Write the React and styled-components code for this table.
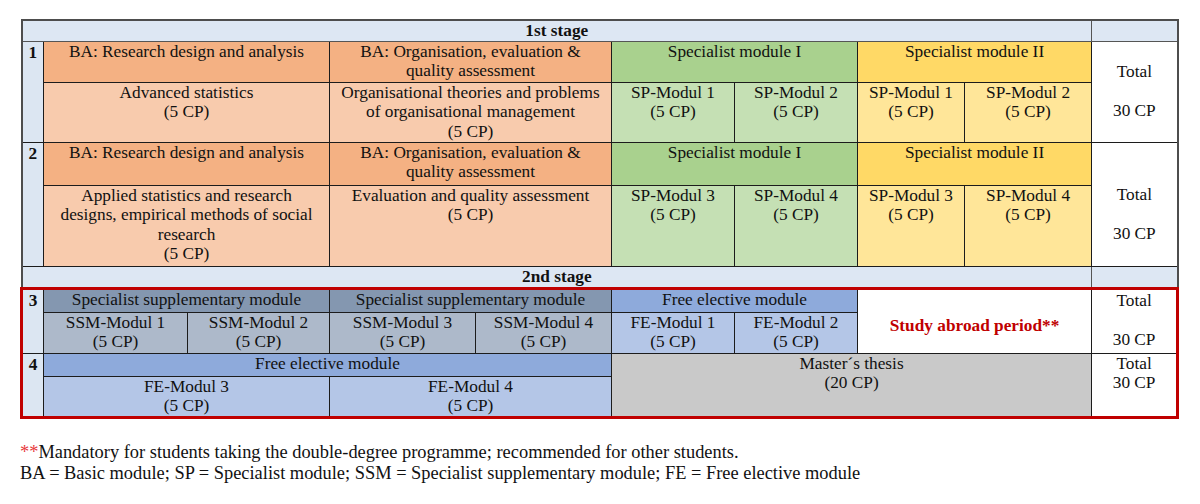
import styled, { createGlobalStyle } from 'styled-components';

const serif = `"Liberation Serif", "Times New Roman", Times, serif`;

const GlobalStyle = createGlobalStyle`
  body {
    margin: 0;
    background: #ffffff;
    font-family: ${serif};
    color: #111111;
  }
`;

const tones = {
  stage: '#dde7f3',
  num: '#dce6f2',
  baHead: '#f4b183',
  baSub: '#f8cbad',
  sp1Head: '#a9d18e',
  sp1Sub: '#c5e0b4',
  sp2Head: '#ffd966',
  sp2Sub: '#ffe699',
  ssmHead: '#8497b0',
  ssmSub: '#adb9ca',
  feHead: '#8eaadb',
  feSub: '#b4c6e7',
  thesis: '#c9c9c9',
  white: '#ffffff',
};

export default function App() {
  return (
    <Page>
      <GlobalStyle />
      <Schedule>
        <colgroup>
          <col style={{ width: 22 }} />
          <col style={{ width: 144 }} />
          <col style={{ width: 142 }} />
          <col style={{ width: 146 }} />
          <col style={{ width: 136 }} />
          <col style={{ width: 123 }} />
          <col style={{ width: 123 }} />
          <col style={{ width: 107 }} />
          <col style={{ width: 127 }} />
          <col style={{ width: 86 }} />
        </colgroup>
        <tbody>
          <Row $h={21}>
            <StageCell colSpan={9}>1st stage</StageCell>
            <StageCell />
          </Row>
          <Row $h={41}>
            <NumCell rowSpan={2}>1</NumCell>
            <Cell colSpan={2} $tone="baHead">BA: Research design and analysis</Cell>
            <Cell colSpan={2} $tone="baHead">
              BA: Organisation, evaluation &amp;
              <br />
              quality assessment
            </Cell>
            <Cell colSpan={2} $tone="sp1Head">Specialist module I</Cell>
            <Cell colSpan={2} $tone="sp2Head">Specialist module II</Cell>
            <TotalCell rowSpan={2} $pad={20}>
              Total
              <br />
              <br />
              30 CP
            </TotalCell>
          </Row>
          <Row $h={60}>
            <Cell colSpan={2} $tone="baSub">
              Advanced statistics
              <br />
              (5 CP)
            </Cell>
            <Cell colSpan={2} $tone="baSub">
              Organisational theories and problems
              <br />
              of organisational management
              <br />
              (5 CP)
            </Cell>
            <ModuleCell tone="sp1Sub" name="SP-Modul 1" />
            <ModuleCell tone="sp1Sub" name="SP-Modul 2" />
            <ModuleCell tone="sp2Sub" name="SP-Modul 1" />
            <ModuleCell tone="sp2Sub" name="SP-Modul 2" />
          </Row>
          <Row $h={43}>
            <NumCell rowSpan={2}>2</NumCell>
            <Cell colSpan={2} $tone="baHead">BA: Research design and analysis</Cell>
            <Cell colSpan={2} $tone="baHead">
              BA: Organisation, evaluation &amp;
              <br />
              quality assessment
            </Cell>
            <Cell colSpan={2} $tone="sp1Head">Specialist module I</Cell>
            <Cell colSpan={2} $tone="sp2Head">Specialist module II</Cell>
            <TotalCell rowSpan={2} $pad={42}>
              Total
              <br />
              <br />
              30 CP
            </TotalCell>
          </Row>
          <Row $h={81}>
            <Cell colSpan={2} $tone="baSub">
              Applied statistics and research
              <br />
              designs, empirical methods of social
              <br />
              research
              <br />
              (5 CP)
            </Cell>
            <Cell colSpan={2} $tone="baSub">
              Evaluation and quality assessment
              <br />
              (5 CP)
            </Cell>
            <ModuleCell tone="sp1Sub" name="SP-Modul 3" />
            <ModuleCell tone="sp1Sub" name="SP-Modul 4" />
            <ModuleCell tone="sp2Sub" name="SP-Modul 3" />
            <ModuleCell tone="sp2Sub" name="SP-Modul 4" />
          </Row>
          <Row $h={22}>
            <StageCell colSpan={9}>2nd stage</StageCell>
            <StageCell />
          </Row>
        </tbody>
        <Highlight>
          <Row $h={24}>
            <NumCell rowSpan={2}>3</NumCell>
            <Cell colSpan={2} $tone="ssmHead">Specialist supplementary module</Cell>
            <Cell colSpan={2} $tone="ssmHead">Specialist supplementary module</Cell>
            <Cell colSpan={2} $tone="feHead">Free elective module</Cell>
            <AbroadCell colSpan={2} rowSpan={2}>Study abroad period**</AbroadCell>
            <TotalCell rowSpan={2} $pad={1}>
              Total
              <br />
              <br />
              30 CP
            </TotalCell>
          </Row>
          <Row $h={41}>
            <ModuleCell tone="ssmSub" name="SSM-Modul 1" />
            <ModuleCell tone="ssmSub" name="SSM-Modul 2" />
            <ModuleCell tone="ssmSub" name="SSM-Modul 3" />
            <ModuleCell tone="ssmSub" name="SSM-Modul 4" />
            <ModuleCell tone="feSub" name="FE-Modul 1" />
            <ModuleCell tone="feSub" name="FE-Modul 2" />
          </Row>
          <Row $h={23}>
            <NumCell rowSpan={2}>4</NumCell>
            <Cell colSpan={4} $tone="feHead">Free elective module</Cell>
            <Cell colSpan={4} rowSpan={2} $tone="thesis">
              Master´s thesis
              <br />
              (20 CP)
            </Cell>
            <TotalCell rowSpan={2} $pad={0}>
              Total
              <br />
              30 CP
            </TotalCell>
          </Row>
          <Row $h={41}>
            <ModuleCell tone="feSub" name="FE-Modul 3" span={2} />
            <ModuleCell tone="feSub" name="FE-Modul 4" span={2} />
          </Row>
        </Highlight>
      </Schedule>
      <Notes>
        <p>
          <Stars>**</Stars>Mandatory for students taking the double-degree programme; recommended for other students.
        </p>
        <p>BA = Basic module; SP = Specialist module; SSM = Specialist supplementary module; FE = Free elective module</p>
      </Notes>
    </Page>
  );
}

function ModuleCell({ tone, name, span = 1 }) {
  return (
    <Cell colSpan={span} $tone={tone}>
      {name}
      <br />
      (5 CP)
    </Cell>
  );
}

const Page = styled.div`
  width: 1200px;
  height: 504px;
  padding: 19px 0 0 20px;
  box-sizing: border-box;
  overflow: hidden;
  font-family: ${serif};
`;

const Schedule = styled.table`
  width: 1156px;
  table-layout: fixed;
  border-collapse: collapse;
  border: 2px solid #4d4d4d;
  font-family: ${serif};
  font-size: 17.3px;
  line-height: 19.5px;
  color: #111111;
`;

const Row = styled.tr`
  height: ${(p) => p.$h}px;
`;

const Cell = styled.td`
  background: ${(p) => tones[p.$tone] || '#ffffff'};
  border: 1px solid #1c1c1c;
  padding: 0 2px;
  text-align: center;
  vertical-align: top;
  white-space: nowrap;
  overflow: hidden;
`;

const StageCell = styled.td`
  background: ${tones.stage};
  border: 1px solid #555555;
  padding: 0;
  text-align: center;
  vertical-align: top;
  font-weight: bold;
  line-height: 19px;
`;

const NumCell = styled.td`
  background: ${tones.num};
  border: 1px solid #1c1c1c;
  border-left: 2px solid #4d4d4d;
  padding: 1px 0 0;
  text-align: center;
  vertical-align: top;
  font-weight: bold;
`;

const TotalCell = styled.td`
  background: #ffffff;
  border: 1px solid #1c1c1c;
  padding: ${(p) => p.$pad}px 2px 0;
  text-align: center;
  vertical-align: top;
`;

const AbroadCell = styled.td`
  background: #ffffff;
  border: 1px solid #1c1c1c;
  padding: 10px 2px 0;
  text-align: center;
  vertical-align: middle;
  font-weight: bold;
  color: #c00000;
`;

const Highlight = styled.tbody`
  border: 3px solid #c00000;
`;

const Notes = styled.div`
  margin-top: 23px;
  font-family: ${serif};
  font-size: 18.4px;
  line-height: 21px;
  color: #111111;

  p {
    margin: 0;
  }
`;

const Stars = styled.span`
  color: #e8383d;
`;
